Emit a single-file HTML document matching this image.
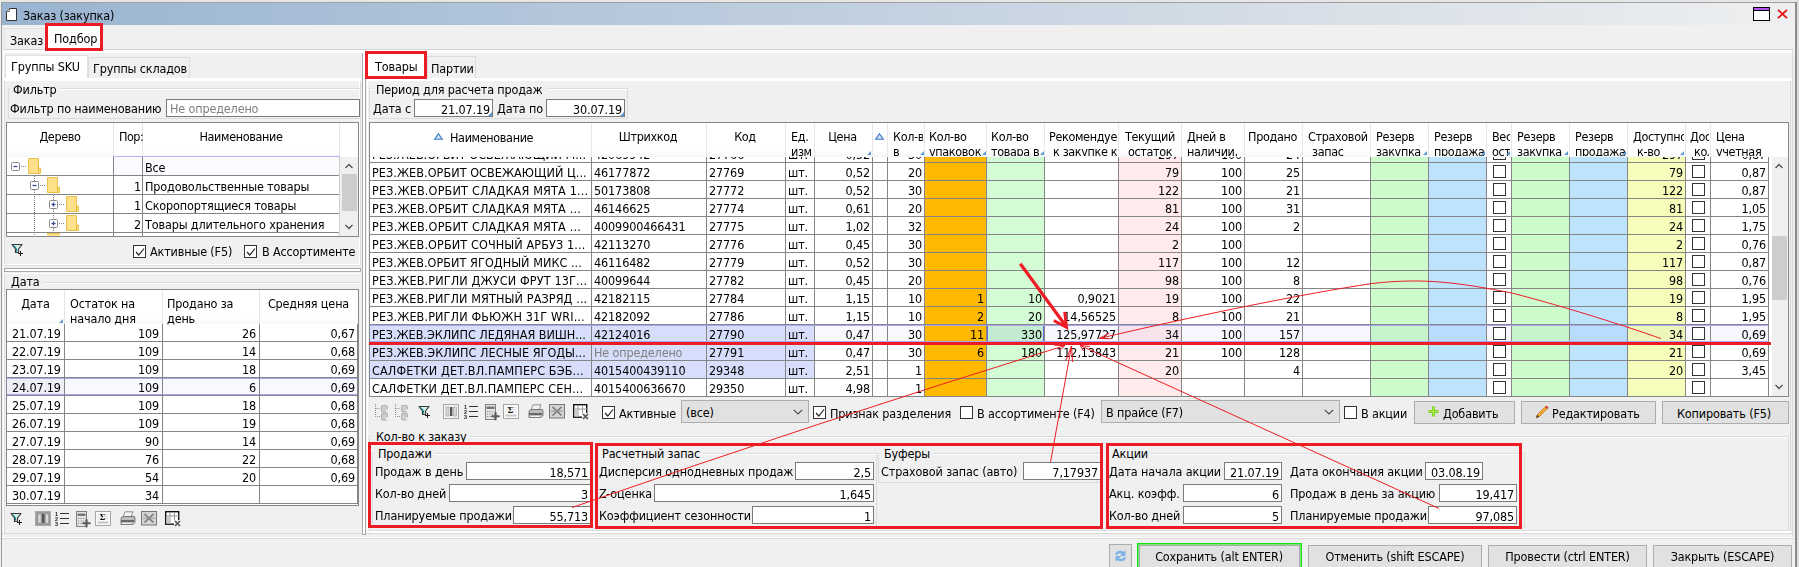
<!DOCTYPE html>
<html lang="ru"><head><meta charset="utf-8"><title>Заказ (закупка)</title>
<style>
html,body{margin:0;padding:0;overflow:hidden}
body{width:1799px;height:567px;position:relative;overflow:hidden;background:#f0f0f0;color:#000;
 font-family:"DejaVu Sans Condensed","Liberation Sans",sans-serif;font-size:12.5px;line-height:16px;letter-spacing:-0.15px}
body div{position:absolute;box-sizing:border-box;white-space:nowrap}
.t{height:16px;overflow:visible}
.g{color:#808080}
.fld{background:#fff;border:1px solid #7a7a7a;text-align:right;padding:2px 2px 0 0;line-height:16px;letter-spacing:-0.12px}
.btn{background:#e1e1e1;border:1px solid #adadad;text-align:center;line-height:20px}
.cb{background:#fff;border:1px solid #333;width:13px;height:13px}
.cbt{background:#fff;border:1px solid #333;width:12px;height:13px}
.hdr{background:linear-gradient(#fff 0,#fff 80%,#f7f8f9 100%)}
.hc{line-height:15px;white-space:nowrap;overflow:hidden;letter-spacing:-0.35px}
.num{letter-spacing:-0.12px}
.uc{letter-spacing:0.1px}
.vl{width:1px;background:#8a8a8a}
.hl{height:1px;background:#8a8a8a}
.cell{height:17px;line-height:17px;overflow:hidden}
svg{position:absolute;overflow:visible}
</style></head><body>
<div style="left:0;top:0;width:1799px;height:567px;overflow:hidden">

<div style="left:0px;top:0px;width:1799px;height:2px;background:#e6e6e6"></div>
<div style="left:1px;top:2px;width:1795px;height:1px;background:#a0a0a0"></div>
<div style="left:1px;top:2px;width:1px;height:565px;background:#9a9a9a"></div>
<div style="left:1795px;top:2px;width:2px;height:565px;background:#8c8c8c"></div>
<div style="left:1797px;top:0px;width:2px;height:567px;background:#dcdcdc"></div>
<div style="left:2px;top:3px;width:1793px;height:22px;background:linear-gradient(90deg,#99b4d1 0,#eeeff0 100%)"></div>
<svg style="left:6px;top:8px" width="12" height="14" viewBox="0 0 12 14"><path d="M3.5 0.5H10.5V12.5H0.5V3.5Z" fill="#fff" stroke="#333" stroke-width="1"/><path d="M3.5 0.5V3.5H0.5" fill="#ddd" stroke="#555" stroke-width="0.8"/></svg>
<div class="t" style="left:23px;top:8px;">Заказ (закупка)</div>
<div style="left:1753px;top:7px;width:17px;height:14px;background:#fff;border:1px solid #000"></div>
<div style="left:1754px;top:8px;width:15px;height:2px;background:#b050f0"></div>
<div style="left:1754px;top:10px;width:15px;height:1px;background:#000"></div>
<svg style="left:1777px;top:9px" width="11" height="10" viewBox="0 0 11 10"><path d="M1 0.8L10 9.2M10 0.8L1 9.2" stroke="#e81010" stroke-width="1.800" fill="none"/></svg>
<div style="left:4px;top:28px;width:42px;height:22px;background:#f0f0f0;border:1px solid #e2e2e2;border-bottom:none"></div>
<div class="t" style="left:10px;top:33px;">Заказ</div>
<div style="left:46px;top:25px;width:56px;height:26px;background:#fff"></div>
<div class="t" style="left:54px;top:31px;">Подбор</div>
<div style="left:3px;top:49px;width:1790px;height:1px;background:#d4d4d4"></div>
<div style="left:3px;top:50px;width:1790px;height:3px;background:#fff"></div>
<div style="left:3px;top:50px;width:1px;height:488px;background:#fff"></div>
<div style="left:1792px;top:50px;width:1px;height:488px;background:#dadada"></div>
<div style="left:5px;top:55px;width:83px;height:24px;background:#fff;border:1px solid #e0e0e0;border-bottom:none"></div>
<div class="t" style="left:11px;top:59px;">Группы SKU</div>
<div style="left:88px;top:57px;width:102px;height:21px;background:#f0f0f0;border:1px solid #dcdcdc;border-bottom:none"></div>
<div class="t" style="left:93px;top:61px;">Группы складов</div>
<div style="left:4px;top:78px;width:357px;height:3px;background:#fff"></div>
<div style="left:4px;top:81px;width:1px;height:185px;background:#dcdcdc"></div>
<div style="left:360px;top:81px;width:1px;height:185px;background:#dcdcdc"></div>
<div style="left:359px;top:81px;width:1px;height:184px;background:#fff"></div>
<div style="left:4px;top:264px;width:356px;height:1px;background:#fff"></div>
<div style="left:4px;top:265px;width:357px;height:1px;background:#dcdcdc"></div>
<div style="left:8px;top:88px;width:352px;height:1px;background:#dcdcdc"></div>
<div style="left:8px;top:89px;width:352px;height:1px;background:#fff"></div>
<div style="left:8px;top:88px;width:1px;height:30px;background:#dcdcdc"></div>
<div style="left:8px;top:118px;width:352px;height:1px;background:#dcdcdc"></div>
<div class="t" style="left:10px;top:82px;background:#f0f0f0;padding:0 3px">Фильтр</div>
<div class="t" style="left:10px;top:101px;">Фильтр по наименованию</div>
<div style="left:166px;top:99px;width:194px;height:18px;background:#fff;border:1px solid #7a7a7a"></div>
<div class="t g" style="left:170px;top:101px;">Не определено</div>
<div style="left:6px;top:122px;width:353px;height:115px;background:#fff;border:1px solid #828790"></div>
<div class="hdr" style="left:7px;top:123px;width:333px;height:34px;"></div>
<div style="left:113px;top:123px;width:1px;height:33px;background:#e5e5e5"></div>
<div style="left:142px;top:123px;width:1px;height:33px;background:#e5e5e5"></div>
<div style="left:339px;top:123px;width:1px;height:33px;background:#e5e5e5"></div>
<div class="t" style="left:7px;top:129px;width:106px;text-align:center;letter-spacing:-0.35px">Дерево</div>
<div class="t" style="left:119px;top:129px;width:24px;overflow:hidden;letter-spacing:-0.5px">Пор:</div>
<div class="t" style="left:143px;top:129px;width:196px;text-align:center;letter-spacing:-0.35px">Наименование</div>
<div style="left:113px;top:156px;width:227px;height:20px;background:#fafaff;border-top:1px solid #b4b4f0;border-bottom:1px solid #b4b4f0"></div>
<div style="left:7px;top:175px;width:332px;height:1px;background:#858585"></div>
<div style="left:7px;top:194px;width:332px;height:1px;background:#858585"></div>
<div style="left:7px;top:213px;width:332px;height:1px;background:#858585"></div>
<div style="left:7px;top:232px;width:332px;height:1px;background:#858585"></div>
<div style="left:113px;top:157px;width:1px;height:79px;background:#858585"></div>
<div style="left:142px;top:157px;width:1px;height:79px;background:#858585"></div>
<div style="left:339px;top:157px;width:1px;height:79px;background:#d0d0d0"></div>
<svg style="left:11px;top:162px" width="9" height="9" viewBox="0 0 9 9"><rect x="0.5" y="0.5" width="8" height="8" rx="1" fill="#fff" stroke="#8a8a8a"/><path d="M2.5 4.5H6.5" stroke="#3a4a9a" stroke-width="1.3"/></svg>
<div style="left:21px;top:166px;width:5px;height:1px;background:repeating-linear-gradient(90deg,#808080 0 1px,transparent 1px 2px)"></div>
<svg style="left:28px;top:158px" width="13" height="16" viewBox="0 0 13 16"><path d="M0.5 0.5H10.5V10H12.5V15.5H0.5Z" fill="#ffe08a" stroke="#eac04c" stroke-width="1"/><path d="M10.5 10V15.5" stroke="#e8b930" stroke-width="1" fill="none"/></svg>
<div style="left:34px;top:176px;width:1px;height:5px;background:repeating-linear-gradient(180deg,#808080 0 1px,transparent 1px 2px)"></div>
<svg style="left:30px;top:181px" width="9" height="9" viewBox="0 0 9 9"><rect x="0.5" y="0.5" width="8" height="8" rx="1" fill="#fff" stroke="#8a8a8a"/><path d="M2.5 4.5H6.5" stroke="#3a4a9a" stroke-width="1.3"/></svg>
<div style="left:40px;top:185px;width:5px;height:1px;background:repeating-linear-gradient(90deg,#808080 0 1px,transparent 1px 2px)"></div>
<svg style="left:47px;top:177px" width="13" height="16" viewBox="0 0 13 16"><path d="M0.5 0.5H10.5V10H12.5V15.5H0.5Z" fill="#ffe08a" stroke="#eac04c" stroke-width="1"/><path d="M10.5 10V15.5" stroke="#e8b930" stroke-width="1" fill="none"/></svg>
<div style="left:34px;top:190px;width:1px;height:46px;background:repeating-linear-gradient(180deg,#808080 0 1px,transparent 1px 2px)"></div>
<div style="left:53px;top:195px;width:1px;height:5px;background:repeating-linear-gradient(180deg,#808080 0 1px,transparent 1px 2px)"></div>
<svg style="left:49px;top:200px" width="9" height="9" viewBox="0 0 9 9"><rect x="0.5" y="0.5" width="8" height="8" rx="1" fill="#fff" stroke="#8a8a8a"/><path d="M2.5 4.5H6.5" stroke="#3a4a9a" stroke-width="1.3"/><path d="M4.5 2.5V6.5" stroke="#3a4a9a" stroke-width="1.3"/></svg>
<div style="left:59px;top:204px;width:5px;height:1px;background:repeating-linear-gradient(90deg,#808080 0 1px,transparent 1px 2px)"></div>
<svg style="left:66px;top:196px" width="13" height="16" viewBox="0 0 13 16"><path d="M0.5 0.5H10.5V10H12.5V15.5H0.5Z" fill="#ffe08a" stroke="#eac04c" stroke-width="1"/><path d="M10.5 10V15.5" stroke="#e8b930" stroke-width="1" fill="none"/></svg>
<div style="left:53px;top:209px;width:1px;height:10px;background:repeating-linear-gradient(180deg,#808080 0 1px,transparent 1px 2px)"></div>
<svg style="left:49px;top:219px" width="9" height="9" viewBox="0 0 9 9"><rect x="0.5" y="0.5" width="8" height="8" rx="1" fill="#fff" stroke="#8a8a8a"/><path d="M2.5 4.5H6.5" stroke="#3a4a9a" stroke-width="1.3"/><path d="M4.5 2.5V6.5" stroke="#3a4a9a" stroke-width="1.3"/></svg>
<div style="left:59px;top:223px;width:5px;height:1px;background:repeating-linear-gradient(90deg,#808080 0 1px,transparent 1px 2px)"></div>
<svg style="left:66px;top:215px" width="13" height="16" viewBox="0 0 13 16"><path d="M0.5 0.5H10.5V10H12.5V15.5H0.5Z" fill="#ffe08a" stroke="#eac04c" stroke-width="1"/><path d="M10.5 10V15.5" stroke="#e8b930" stroke-width="1" fill="none"/></svg>
<div style="left:53px;top:228px;width:1px;height:4px;background:repeating-linear-gradient(180deg,#808080 0 1px,transparent 1px 2px)"></div>
<div style="left:47px;top:233px;width:13px;height:3px;background:#ffe08a;border-top:1px solid #eac04c"></div>
<div class="t" style="left:145px;top:160px;">Все</div>
<div class="t" style="left:114px;top:179px;width:27px;text-align:right;">1</div>
<div class="t" style="left:145px;top:179px;">Продовольственные товары</div>
<div class="t" style="left:114px;top:198px;width:27px;text-align:right;">1</div>
<div class="t" style="left:145px;top:198px;">Скоропортящиеся товары</div>
<div class="t" style="left:114px;top:217px;width:27px;text-align:right;">2</div>
<div class="t" style="left:145px;top:217px;">Товары длительного хранения</div>
<div style="left:340px;top:157px;width:18px;height:79px;background:#f0f0f0"></div>
<div style="left:342px;top:174px;width:15px;height:37px;background:#cdcdcd"></div>
<svg style="left:345px;top:163px" width="8" height="6" viewBox="0 0 8 6"><path d="M0.5 5L4 1.5L7.5 5" fill="none" stroke="#505050" stroke-width="1.3"/></svg>
<svg style="left:345px;top:224px" width="8" height="6" viewBox="0 0 8 6"><path d="M0.5 1L4 4.5L7.5 1" fill="none" stroke="#505050" stroke-width="1.3"/></svg>
<svg style="left:11px;top:243px" width="14" height="14" viewBox="0 0 14 14"><path d="M1 1.500H11L7.500 6V9.500H4.500V6Z" fill="#cfeeee" stroke="#3a3a3a" stroke-width="1.200" stroke-linejoin="round"/><path d="M3 2.500L5.500 6V8.500" fill="none" stroke="#0a8a8a" stroke-width="1"/><path d="M9.500 8V13M7 10.500H12" stroke="#1a1a1a" stroke-width="1"/></svg>
<div style="left:133px;top:245px;width:13px;height:13px;background:#fff;border:1px solid #333"><svg style="left:1px;top:1px" width="10" height="10" viewBox="0 0 10 10"><path d="M1 5L3.8 8L9 1.5" fill="none" stroke="#222" stroke-width="1.2"/></svg></div>
<div class="t" style="left:150px;top:244px;">Активные (F5)</div>
<div style="left:244px;top:245px;width:13px;height:13px;background:#fff;border:1px solid #333"><svg style="left:1px;top:1px" width="10" height="10" viewBox="0 0 10 10"><path d="M1 5L3.8 8L9 1.5" fill="none" stroke="#222" stroke-width="1.2"/></svg></div>
<div class="t" style="left:262px;top:244px;">В Ассортименте</div>
<div style="left:4px;top:268px;width:357px;height:4px;background:#fff;border:1px solid #a8a8a8"></div>
<div style="left:4px;top:273px;width:357px;height:1px;background:#fff"></div>
<div style="left:4px;top:274px;width:1px;height:260px;background:#dcdcdc"></div>
<div style="left:2px;top:533px;width:360px;height:1px;background:#d9d9d9"></div>
<div style="left:8px;top:282px;width:352px;height:1px;background:#dcdcdc"></div>
<div style="left:8px;top:283px;width:352px;height:1px;background:#fff"></div>
<div class="t" style="left:8px;top:274px;background:#f0f0f0;padding:0 3px">Дата</div>
<div style="left:6px;top:289px;width:353px;height:217px;background:#fff;border:1px solid #828790"></div>
<div class="hdr" style="left:7px;top:290px;width:351px;height:34px;"></div>
<div style="left:64px;top:290px;width:1px;height:34px;background:#e5e5e5"></div>
<div style="left:162px;top:290px;width:1px;height:34px;background:#e5e5e5"></div>
<div style="left:259px;top:290px;width:1px;height:34px;background:#e5e5e5"></div>
<div class="t" style="left:7px;top:296px;width:57px;text-align:center;">Дата</div>
<div class="t" style="left:70px;top:296px;">Остаток на</div>
<div class="t" style="left:70px;top:311px;">начало дня</div>
<div class="t" style="left:167px;top:296px;">Продано за</div>
<div class="t" style="left:167px;top:311px;">день</div>
<div class="t" style="left:260px;top:296px;width:97px;text-align:center;">Средняя цена</div>
<svg style="left:59px;top:319px" width="4" height="4" viewBox="0 0 4 4"><path d="M4 0V4H0Z" fill="#5b9bd5"/></svg>
<div class="t" style="left:12px;top:326px;">21.07.19</div>
<div class="t" style="left:65px;top:326px;width:94px;text-align:right;">109</div>
<div class="t" style="left:163px;top:326px;width:93px;text-align:right;">26</div>
<div class="t" style="left:260px;top:326px;width:95px;text-align:right;">0,67</div>
<div style="left:7px;top:341px;width:351px;height:1px;background:#858585"></div>
<div class="t" style="left:12px;top:344px;">22.07.19</div>
<div class="t" style="left:65px;top:344px;width:94px;text-align:right;">109</div>
<div class="t" style="left:163px;top:344px;width:93px;text-align:right;">14</div>
<div class="t" style="left:260px;top:344px;width:95px;text-align:right;">0,68</div>
<div style="left:7px;top:359px;width:351px;height:1px;background:#858585"></div>
<div class="t" style="left:12px;top:362px;">23.07.19</div>
<div class="t" style="left:65px;top:362px;width:94px;text-align:right;">109</div>
<div class="t" style="left:163px;top:362px;width:93px;text-align:right;">18</div>
<div class="t" style="left:260px;top:362px;width:95px;text-align:right;">0,69</div>
<div style="left:7px;top:378px;width:351px;height:17px;background:#f8f8ff"></div>
<div style="left:7px;top:378px;width:57px;height:17px;background:#eeeef6"></div>
<div style="left:7px;top:377px;width:351px;height:1px;background:#858585"></div>
<div class="t" style="left:12px;top:380px;">24.07.19</div>
<div class="t" style="left:65px;top:380px;width:94px;text-align:right;">109</div>
<div class="t" style="left:163px;top:380px;width:93px;text-align:right;">6</div>
<div class="t" style="left:260px;top:380px;width:95px;text-align:right;">0,69</div>
<div style="left:7px;top:395px;width:351px;height:1px;background:#858585"></div>
<div class="t" style="left:12px;top:398px;">25.07.19</div>
<div class="t" style="left:65px;top:398px;width:94px;text-align:right;">109</div>
<div class="t" style="left:163px;top:398px;width:93px;text-align:right;">18</div>
<div class="t" style="left:260px;top:398px;width:95px;text-align:right;">0,68</div>
<div style="left:7px;top:413px;width:351px;height:1px;background:#858585"></div>
<div class="t" style="left:12px;top:416px;">26.07.19</div>
<div class="t" style="left:65px;top:416px;width:94px;text-align:right;">109</div>
<div class="t" style="left:163px;top:416px;width:93px;text-align:right;">19</div>
<div class="t" style="left:260px;top:416px;width:95px;text-align:right;">0,68</div>
<div style="left:7px;top:431px;width:351px;height:1px;background:#858585"></div>
<div class="t" style="left:12px;top:434px;">27.07.19</div>
<div class="t" style="left:65px;top:434px;width:94px;text-align:right;">90</div>
<div class="t" style="left:163px;top:434px;width:93px;text-align:right;">14</div>
<div class="t" style="left:260px;top:434px;width:95px;text-align:right;">0,69</div>
<div style="left:7px;top:449px;width:351px;height:1px;background:#858585"></div>
<div class="t" style="left:12px;top:452px;">28.07.19</div>
<div class="t" style="left:65px;top:452px;width:94px;text-align:right;">76</div>
<div class="t" style="left:163px;top:452px;width:93px;text-align:right;">22</div>
<div class="t" style="left:260px;top:452px;width:95px;text-align:right;">0,68</div>
<div style="left:7px;top:467px;width:351px;height:1px;background:#858585"></div>
<div class="t" style="left:12px;top:470px;">29.07.19</div>
<div class="t" style="left:65px;top:470px;width:94px;text-align:right;">54</div>
<div class="t" style="left:163px;top:470px;width:93px;text-align:right;">20</div>
<div class="t" style="left:260px;top:470px;width:95px;text-align:right;">0,69</div>
<div style="left:7px;top:485px;width:351px;height:1px;background:#858585"></div>
<div class="t" style="left:12px;top:488px;">30.07.19</div>
<div class="t" style="left:65px;top:488px;width:94px;text-align:right;">34</div>
<div class="t" style="left:163px;top:488px;width:93px;text-align:right;"></div>
<div class="t" style="left:260px;top:488px;width:95px;text-align:right;"></div>
<div style="left:7px;top:503px;width:351px;height:1px;background:#858585"></div>
<div style="left:7px;top:378px;width:351px;height:1px;background:#a8a8f6"></div>
<div style="left:7px;top:394px;width:351px;height:1px;background:#a8a8f6"></div>
<div style="left:64px;top:324px;width:1px;height:180px;background:#858585"></div>
<div style="left:162px;top:324px;width:1px;height:180px;background:#858585"></div>
<div style="left:259px;top:324px;width:1px;height:180px;background:#858585"></div>
<div style="left:357px;top:324px;width:1px;height:180px;background:#858585"></div>
<svg style="left:10px;top:512px" width="14" height="14" viewBox="0 0 14 14"><path d="M1 1.500H11L7.500 6V9.500H4.500V6Z" fill="#cfeeee" stroke="#3a3a3a" stroke-width="1.200" stroke-linejoin="round"/><path d="M3 2.500L5.500 6V8.500" fill="none" stroke="#0a8a8a" stroke-width="1"/><path d="M9.500 8V13M7 10.500H12" stroke="#1a1a1a" stroke-width="1"/></svg>
<svg style="left:35px;top:511px" width="16" height="15" viewBox="0 0 16 15"><rect x="0.5" y="0.5" width="15" height="14" fill="#9a9a9a" stroke="#a8a8a8"/><rect x="3" y="3" width="3" height="9" fill="#d8d8d8" stroke="#999" stroke-width=".6"/><rect x="7" y="3" width="2.4" height="9" fill="#555"/><rect x="10.4" y="3" width="3" height="9" fill="#d8d8d8" stroke="#999" stroke-width=".6"/></svg>
<svg style="left:55px;top:511px" width="15" height="15" viewBox="0 0 15 15"><path d="M5 2.5H14M5 7.5H14M5 12.5H14" stroke="#333" stroke-width="1.1"/><text x="0" y="5" font-size="5.5" font-weight="bold" font-family="Liberation Sans,sans-serif" fill="#222">1</text><text x="0" y="10" font-size="5.5" font-weight="bold" font-family="Liberation Sans,sans-serif" fill="#222">2</text><text x="0" y="15" font-size="5.5" font-weight="bold" font-family="Liberation Sans,sans-serif" fill="#222">3</text></svg>
<svg style="left:76px;top:511px" width="16" height="16" viewBox="0 0 16 16"><rect x="0.500" y="0.500" width="10" height="15" fill="#e6e6e6" stroke="#808080"/><rect x="1.500" y="2.500" width="8" height="2.500" fill="#777"/><path d="M2 7.500H9.500M2 10H9.500M2 12.500H9.500" stroke="#8a8a8a" stroke-width="1.100" stroke-dasharray="1.200 1.200"/><path d="M10.500 9V15.500M7.250 12.250H13.750" stroke="#5a5a5a" stroke-width="2.200" stroke-linecap="round"/></svg>
<svg style="left:95px;top:511px" width="16" height="15" viewBox="0 0 16 15"><rect x="0.500" y="0.500" width="15" height="14" fill="#fbfbfb" stroke="#a6a6a6"/><path d="M2.500 3.500H13.500M2.500 5.500H13.500M2.500 7.500H13.500" stroke="#e0e0e0" stroke-width="1"/><rect x="2.500" y="10.500" width="11" height="2" fill="#c4c4c4"/><text x="4.800" y="9.300" font-size="8.500" font-weight="bold" font-family="Liberation Serif,serif" fill="#111">Σ</text></svg>
<svg style="left:120px;top:511px" width="16" height="15" viewBox="0 0 16 15"><path d="M5 0.800H13L11 6H3Z" fill="#f2f2f2" stroke="#777" stroke-width=".8"/><path d="M1 7L3 5.500H14.500L15 7V11.500L13 13.500H1Z" fill="#bdbdbd" stroke="#666" stroke-width=".8"/><path d="M1 10H14" stroke="#555" stroke-width="1.6"/><path d="M2 12.500H12" stroke="#eee" stroke-width="1"/></svg>
<svg style="left:141px;top:511px" width="16" height="15" viewBox="0 0 16 15"><rect x="0.5" y="0.5" width="15" height="13.500" fill="#d4d4d4" stroke="#777"/><path d="M3.500 3L12.500 11.500M12.500 3L3.500 11.500" stroke="#777" stroke-width="1.600"/><path d="M2 7.200H14" stroke="#999" stroke-width="1"/></svg>
<svg style="left:165px;top:511px" width="16" height="16" viewBox="0 0 16 16"><rect x="0.700" y="0.700" width="13" height="12.500" fill="#fff" stroke="#111" stroke-width="1.400"/><path d="M1 5H14M5 1V13M9.500 1V13" stroke="#999" stroke-width="1"/><rect x="1.500" y="5.500" width="3.500" height="7" fill="#ccc"/><rect x="9" y="9" width="7" height="7" fill="#eee"/><path d="M10 10L15 15M15 10L10 15" stroke="#555" stroke-width="1.600"/></svg>
<div style="left:362px;top:53px;width:4px;height:482px;background:#fff;border:1px solid #ababab;border-top:none"></div>
<div style="left:368px;top:54px;width:58px;height:24px;background:#fff"></div>
<div class="t" style="left:375px;top:59px;">Товары</div>
<div style="left:427px;top:56px;width:49px;height:22px;background:#f0f0f0;border:1px solid #dcdcdc;border-bottom:none"></div>
<div class="t" style="left:431px;top:61px;">Партии</div>
<div style="left:367px;top:78px;width:1425px;height:3px;background:#fff"></div>
<div style="left:367px;top:78px;width:1px;height:455px;background:#fff"></div>
<div style="left:1790px;top:81px;width:1px;height:452px;background:#d9d9d9"></div>
<div style="left:369px;top:531px;width:1422px;height:2px;background:#fff"></div>
<div style="left:367px;top:533px;width:1425px;height:1px;background:#d9d9d9"></div>
<div style="left:369px;top:88px;width:259px;height:1px;background:#dcdcdc"></div>
<div style="left:369px;top:89px;width:259px;height:1px;background:#fff"></div>
<div style="left:369px;top:88px;width:1px;height:30px;background:#dcdcdc"></div>
<div style="left:627px;top:88px;width:1px;height:30px;background:#dcdcdc"></div>
<div style="left:369px;top:118px;width:259px;height:1px;background:#dcdcdc"></div>
<div class="t" style="left:373px;top:82px;background:#f0f0f0;padding:0 3px">Период для расчета продаж</div>
<div class="t" style="left:373px;top:101px;">Дата с</div>
<div class="fld" style="left:414px;top:99px;width:79px;height:18px;">21.07.19</div>
<div class="t" style="left:497px;top:101px;">Дата по</div>
<div class="fld" style="left:546px;top:99px;width:79px;height:18px;">30.07.19</div>
<svg style="left:488px;top:112px" width="4" height="4" viewBox="0 0 4 4"><path d="M4 0V4H0Z" fill="#5b9bd5"/></svg>
<svg style="left:620px;top:112px" width="4" height="4" viewBox="0 0 4 4"><path d="M4 0V4H0Z" fill="#5b9bd5"/></svg>
<div style="left:369px;top:122px;width:1420px;height:275px;background:#fff;border:1px solid #828790"></div>
<div style="left:924px;top:157px;width:62px;height:239px;background:#ffb900"></div>
<div style="left:986px;top:157px;width:58px;height:239px;background:#d4fcd4"></div>
<div style="left:1118px;top:157px;width:63px;height:239px;background:#ffebeb"></div>
<div style="left:1370px;top:157px;width:58px;height:239px;background:#ccfccc"></div>
<div style="left:1428px;top:157px;width:58px;height:239px;background:#bde3fd"></div>
<div style="left:1511px;top:157px;width:58px;height:239px;background:#ccfccc"></div>
<div style="left:1569px;top:157px;width:58px;height:239px;background:#bde3fd"></div>
<div style="left:1627px;top:157px;width:58px;height:239px;background:#f6fdba"></div>
<div style="left:370px;top:325px;width:444px;height:17px;background:#d6defb"></div>
<div style="left:370px;top:343px;width:444px;height:17px;background:#d6defb"></div>
<div style="left:370px;top:361px;width:444px;height:17px;background:#d6defb"></div>
<div style="left:815px;top:325px;width:109px;height:17px;background:#f8f8ff"></div>
<div style="left:1045px;top:325px;width:723px;height:17px;background:#f7f7ff;mix-blend-mode:multiply"></div>
<div style="left:987px;top:325px;width:57px;height:17px;background:#c3ebcf;border:1px solid #6a6ae0"></div>
<div style="left:0;top:157px;width:1790px;height:239px;overflow:hidden">
<div class="cell uc" style="left:372px;top:-11px;width:218px;letter-spacing:0.0px">РЕЗ.ЖЕВ.ОРБИТ ОСВЕЖАЮЩИЙ М...</div>
<div class="cell num" style="left:594px;top:-11px;width:111px">42069942</div>
<div class="cell num" style="left:709px;top:-11px;width:75px">27766</div>
<div class="cell num" style="left:788px;top:-11px;width:25px">шт.</div>
<div class="cell num" style="left:814px;top:-11px;width:56px;text-align:right">0,52</div>
<div class="cell num" style="left:887px;top:-11px;width:35px;text-align:right">30</div>
<div class="cell num" style="left:1118px;top:-11px;width:61px;text-align:right">297</div>
<div class="cell num" style="left:1181px;top:-11px;width:61px;text-align:right">100</div>
<div class="cell num" style="left:1244px;top:-11px;width:56px;text-align:right">24</div>
<div class="cell num" style="left:1627px;top:-11px;width:56px;text-align:right">297</div>
<div class="cell num" style="left:1710px;top:-11px;width:56px;text-align:right">0,87</div>
<div style="left:1493px;top:-10px;width:13px;height:13px;background:#fff;border:1px solid #333"></div>
<div style="left:1692px;top:-10px;width:13px;height:13px;background:#fff;border:1px solid #333"></div>
<div class="cell uc" style="left:372px;top:7px;width:218px;letter-spacing:0.059px">РЕЗ.ЖЕВ.ОРБИТ ОСВЕЖАЮЩИЙ Ц...</div>
<div class="cell num" style="left:594px;top:7px;width:111px">46177872</div>
<div class="cell num" style="left:709px;top:7px;width:75px">27769</div>
<div class="cell num" style="left:788px;top:7px;width:25px">шт.</div>
<div class="cell num" style="left:814px;top:7px;width:56px;text-align:right">0,52</div>
<div class="cell num" style="left:887px;top:7px;width:35px;text-align:right">20</div>
<div class="cell num" style="left:1118px;top:7px;width:61px;text-align:right">79</div>
<div class="cell num" style="left:1181px;top:7px;width:61px;text-align:right">100</div>
<div class="cell num" style="left:1244px;top:7px;width:56px;text-align:right">25</div>
<div class="cell num" style="left:1627px;top:7px;width:56px;text-align:right">79</div>
<div class="cell num" style="left:1710px;top:7px;width:56px;text-align:right">0,87</div>
<div style="left:1493px;top:8px;width:13px;height:13px;background:#fff;border:1px solid #333"></div>
<div style="left:1692px;top:8px;width:13px;height:13px;background:#fff;border:1px solid #333"></div>
<div class="cell uc" style="left:372px;top:25px;width:218px;letter-spacing:0.181px">РЕЗ.ЖЕВ.ОРБИТ СЛАДКАЯ МЯТА 1...</div>
<div class="cell num" style="left:594px;top:25px;width:111px">50173808</div>
<div class="cell num" style="left:709px;top:25px;width:75px">27772</div>
<div class="cell num" style="left:788px;top:25px;width:25px">шт.</div>
<div class="cell num" style="left:814px;top:25px;width:56px;text-align:right">0,52</div>
<div class="cell num" style="left:887px;top:25px;width:35px;text-align:right">30</div>
<div class="cell num" style="left:1118px;top:25px;width:61px;text-align:right">122</div>
<div class="cell num" style="left:1181px;top:25px;width:61px;text-align:right">100</div>
<div class="cell num" style="left:1244px;top:25px;width:56px;text-align:right">21</div>
<div class="cell num" style="left:1627px;top:25px;width:56px;text-align:right">122</div>
<div class="cell num" style="left:1710px;top:25px;width:56px;text-align:right">0,87</div>
<div style="left:1493px;top:26px;width:13px;height:13px;background:#fff;border:1px solid #333"></div>
<div style="left:1692px;top:26px;width:13px;height:13px;background:#fff;border:1px solid #333"></div>
<div class="cell uc" style="left:372px;top:43px;width:218px;letter-spacing:0.18px">РЕЗ.ЖЕВ.ОРБИТ СЛАДКАЯ МЯТА ...</div>
<div class="cell num" style="left:594px;top:43px;width:111px">46146625</div>
<div class="cell num" style="left:709px;top:43px;width:75px">27774</div>
<div class="cell num" style="left:788px;top:43px;width:25px">шт.</div>
<div class="cell num" style="left:814px;top:43px;width:56px;text-align:right">0,61</div>
<div class="cell num" style="left:887px;top:43px;width:35px;text-align:right">20</div>
<div class="cell num" style="left:1118px;top:43px;width:61px;text-align:right">81</div>
<div class="cell num" style="left:1181px;top:43px;width:61px;text-align:right">100</div>
<div class="cell num" style="left:1244px;top:43px;width:56px;text-align:right">31</div>
<div class="cell num" style="left:1627px;top:43px;width:56px;text-align:right">81</div>
<div class="cell num" style="left:1710px;top:43px;width:56px;text-align:right">1,05</div>
<div style="left:1493px;top:44px;width:13px;height:13px;background:#fff;border:1px solid #333"></div>
<div style="left:1692px;top:44px;width:13px;height:13px;background:#fff;border:1px solid #333"></div>
<div class="cell uc" style="left:372px;top:61px;width:218px;letter-spacing:0.18px">РЕЗ.ЖЕВ.ОРБИТ СЛАДКАЯ МЯТА ...</div>
<div class="cell num" style="left:594px;top:61px;width:111px">4009900466431</div>
<div class="cell num" style="left:709px;top:61px;width:75px">27775</div>
<div class="cell num" style="left:788px;top:61px;width:25px">шт.</div>
<div class="cell num" style="left:814px;top:61px;width:56px;text-align:right">1,02</div>
<div class="cell num" style="left:887px;top:61px;width:35px;text-align:right">32</div>
<div class="cell num" style="left:1118px;top:61px;width:61px;text-align:right">24</div>
<div class="cell num" style="left:1181px;top:61px;width:61px;text-align:right">100</div>
<div class="cell num" style="left:1244px;top:61px;width:56px;text-align:right">2</div>
<div class="cell num" style="left:1627px;top:61px;width:56px;text-align:right">24</div>
<div class="cell num" style="left:1710px;top:61px;width:56px;text-align:right">1,75</div>
<div style="left:1493px;top:62px;width:13px;height:13px;background:#fff;border:1px solid #333"></div>
<div style="left:1692px;top:62px;width:13px;height:13px;background:#fff;border:1px solid #333"></div>
<div class="cell uc" style="left:372px;top:79px;width:218px;letter-spacing:0.113px">РЕЗ.ЖЕВ.ОРБИТ СОЧНЫЙ АРБУЗ 1...</div>
<div class="cell num" style="left:594px;top:79px;width:111px">42113270</div>
<div class="cell num" style="left:709px;top:79px;width:75px">27776</div>
<div class="cell num" style="left:788px;top:79px;width:25px">шт.</div>
<div class="cell num" style="left:814px;top:79px;width:56px;text-align:right">0,45</div>
<div class="cell num" style="left:887px;top:79px;width:35px;text-align:right">30</div>
<div class="cell num" style="left:1118px;top:79px;width:61px;text-align:right">2</div>
<div class="cell num" style="left:1181px;top:79px;width:61px;text-align:right">100</div>
<div class="cell num" style="left:1627px;top:79px;width:56px;text-align:right">2</div>
<div class="cell num" style="left:1710px;top:79px;width:56px;text-align:right">0,76</div>
<div style="left:1493px;top:80px;width:13px;height:13px;background:#fff;border:1px solid #333"></div>
<div style="left:1692px;top:80px;width:13px;height:13px;background:#fff;border:1px solid #333"></div>
<div class="cell uc" style="left:372px;top:97px;width:218px;letter-spacing:0.053px">РЕЗ.ЖЕВ.ОРБИТ ЯГОДНЫЙ МИКС ...</div>
<div class="cell num" style="left:594px;top:97px;width:111px">46116482</div>
<div class="cell num" style="left:709px;top:97px;width:75px">27779</div>
<div class="cell num" style="left:788px;top:97px;width:25px">шт.</div>
<div class="cell num" style="left:814px;top:97px;width:56px;text-align:right">0,52</div>
<div class="cell num" style="left:887px;top:97px;width:35px;text-align:right">30</div>
<div class="cell num" style="left:1118px;top:97px;width:61px;text-align:right">117</div>
<div class="cell num" style="left:1181px;top:97px;width:61px;text-align:right">100</div>
<div class="cell num" style="left:1244px;top:97px;width:56px;text-align:right">12</div>
<div class="cell num" style="left:1627px;top:97px;width:56px;text-align:right">117</div>
<div class="cell num" style="left:1710px;top:97px;width:56px;text-align:right">0,87</div>
<div style="left:1493px;top:98px;width:13px;height:13px;background:#fff;border:1px solid #333"></div>
<div style="left:1692px;top:98px;width:13px;height:13px;background:#fff;border:1px solid #333"></div>
<div class="cell uc" style="left:372px;top:115px;width:218px;letter-spacing:0.139px">РЕЗ.ЖЕВ.РИГЛИ ДЖУСИ ФРУТ 13Г...</div>
<div class="cell num" style="left:594px;top:115px;width:111px">40099644</div>
<div class="cell num" style="left:709px;top:115px;width:75px">27782</div>
<div class="cell num" style="left:788px;top:115px;width:25px">шт.</div>
<div class="cell num" style="left:814px;top:115px;width:56px;text-align:right">0,45</div>
<div class="cell num" style="left:887px;top:115px;width:35px;text-align:right">20</div>
<div class="cell num" style="left:1118px;top:115px;width:61px;text-align:right">98</div>
<div class="cell num" style="left:1181px;top:115px;width:61px;text-align:right">100</div>
<div class="cell num" style="left:1244px;top:115px;width:56px;text-align:right">8</div>
<div class="cell num" style="left:1627px;top:115px;width:56px;text-align:right">98</div>
<div class="cell num" style="left:1710px;top:115px;width:56px;text-align:right">0,76</div>
<div style="left:1493px;top:116px;width:13px;height:13px;background:#fff;border:1px solid #333"></div>
<div style="left:1692px;top:116px;width:13px;height:13px;background:#fff;border:1px solid #333"></div>
<div class="cell uc" style="left:372px;top:133px;width:218px;letter-spacing:0.113px">РЕЗ.ЖЕВ.РИГЛИ МЯТНЫЙ РАЗРЯД ...</div>
<div class="cell num" style="left:594px;top:133px;width:111px">42182115</div>
<div class="cell num" style="left:709px;top:133px;width:75px">27784</div>
<div class="cell num" style="left:788px;top:133px;width:25px">шт.</div>
<div class="cell num" style="left:814px;top:133px;width:56px;text-align:right">1,15</div>
<div class="cell num" style="left:887px;top:133px;width:35px;text-align:right">10</div>
<div class="cell num" style="left:924px;top:133px;width:60px;text-align:right">1</div>
<div class="cell num" style="left:986px;top:133px;width:56px;text-align:right">10</div>
<div class="cell num" style="left:1044px;top:133px;width:72px;text-align:right">0,9021</div>
<div class="cell num" style="left:1118px;top:133px;width:61px;text-align:right">19</div>
<div class="cell num" style="left:1181px;top:133px;width:61px;text-align:right">100</div>
<div class="cell num" style="left:1244px;top:133px;width:56px;text-align:right">22</div>
<div class="cell num" style="left:1627px;top:133px;width:56px;text-align:right">19</div>
<div class="cell num" style="left:1710px;top:133px;width:56px;text-align:right">1,95</div>
<div style="left:1493px;top:134px;width:13px;height:13px;background:#fff;border:1px solid #333"></div>
<div style="left:1692px;top:134px;width:13px;height:13px;background:#fff;border:1px solid #333"></div>
<div class="cell uc" style="left:372px;top:151px;width:218px;letter-spacing:0.123px">РЕЗ.ЖЕВ.РИГЛИ ФЬЮЖН 31Г WRI...</div>
<div class="cell num" style="left:594px;top:151px;width:111px">42182092</div>
<div class="cell num" style="left:709px;top:151px;width:75px">27786</div>
<div class="cell num" style="left:788px;top:151px;width:25px">шт.</div>
<div class="cell num" style="left:814px;top:151px;width:56px;text-align:right">1,15</div>
<div class="cell num" style="left:887px;top:151px;width:35px;text-align:right">10</div>
<div class="cell num" style="left:924px;top:151px;width:60px;text-align:right">2</div>
<div class="cell num" style="left:986px;top:151px;width:56px;text-align:right">20</div>
<div class="cell num" style="left:1044px;top:151px;width:72px;text-align:right">14,56525</div>
<div class="cell num" style="left:1118px;top:151px;width:61px;text-align:right">8</div>
<div class="cell num" style="left:1181px;top:151px;width:61px;text-align:right">100</div>
<div class="cell num" style="left:1244px;top:151px;width:56px;text-align:right">21</div>
<div class="cell num" style="left:1627px;top:151px;width:56px;text-align:right">8</div>
<div class="cell num" style="left:1710px;top:151px;width:56px;text-align:right">1,95</div>
<div style="left:1493px;top:152px;width:13px;height:13px;background:#fff;border:1px solid #333"></div>
<div style="left:1692px;top:152px;width:13px;height:13px;background:#fff;border:1px solid #333"></div>
<div class="cell uc" style="left:372px;top:169px;width:218px;letter-spacing:-0.033px">РЕЗ.ЖЕВ.ЭКЛИПС ЛЕДЯНАЯ ВИШН...</div>
<div class="cell num" style="left:594px;top:169px;width:111px">42124016</div>
<div class="cell num" style="left:709px;top:169px;width:75px">27790</div>
<div class="cell num" style="left:788px;top:169px;width:25px">шт.</div>
<div class="cell num" style="left:814px;top:169px;width:56px;text-align:right">0,47</div>
<div class="cell num" style="left:887px;top:169px;width:35px;text-align:right">30</div>
<div class="cell num" style="left:924px;top:169px;width:60px;text-align:right">11</div>
<div class="cell num" style="left:986px;top:169px;width:56px;text-align:right">330</div>
<div class="cell num" style="left:1044px;top:169px;width:72px;text-align:right">125,97727</div>
<div class="cell num" style="left:1118px;top:169px;width:61px;text-align:right">34</div>
<div class="cell num" style="left:1181px;top:169px;width:61px;text-align:right">100</div>
<div class="cell num" style="left:1244px;top:169px;width:56px;text-align:right">157</div>
<div class="cell num" style="left:1627px;top:169px;width:56px;text-align:right">34</div>
<div class="cell num" style="left:1710px;top:169px;width:56px;text-align:right">0,69</div>
<div style="left:1493px;top:170px;width:13px;height:13px;background:#fff;border:1px solid #333"></div>
<div style="left:1692px;top:170px;width:13px;height:13px;background:#fff;border:1px solid #333"></div>
<div class="cell uc" style="left:372px;top:187px;width:218px;letter-spacing:0.02px">РЕЗ.ЖЕВ.ЭКЛИПС ЛЕСНЫЕ ЯГОДЫ...</div>
<div class="cell g" style="left:594px;top:187px;width:111px">Не определено</div>
<div class="cell num" style="left:709px;top:187px;width:75px">27791</div>
<div class="cell num" style="left:788px;top:187px;width:25px">шт.</div>
<div class="cell num" style="left:814px;top:187px;width:56px;text-align:right">0,47</div>
<div class="cell num" style="left:887px;top:187px;width:35px;text-align:right">30</div>
<div class="cell num" style="left:924px;top:187px;width:60px;text-align:right">6</div>
<div class="cell num" style="left:986px;top:187px;width:56px;text-align:right">180</div>
<div class="cell num" style="left:1044px;top:187px;width:72px;text-align:right">112,13843</div>
<div class="cell num" style="left:1118px;top:187px;width:61px;text-align:right">21</div>
<div class="cell num" style="left:1181px;top:187px;width:61px;text-align:right">100</div>
<div class="cell num" style="left:1244px;top:187px;width:56px;text-align:right">128</div>
<div class="cell num" style="left:1627px;top:187px;width:56px;text-align:right">21</div>
<div class="cell num" style="left:1710px;top:187px;width:56px;text-align:right">0,69</div>
<div style="left:1493px;top:188px;width:13px;height:13px;background:#fff;border:1px solid #333"></div>
<div style="left:1692px;top:188px;width:13px;height:13px;background:#fff;border:1px solid #333"></div>
<div class="cell uc" style="left:372px;top:205px;width:218px;letter-spacing:0.147px">САЛФЕТКИ ДЕТ.ВЛ.ПАМПЕРС БЭБ...</div>
<div class="cell num" style="left:594px;top:205px;width:111px">4015400439110</div>
<div class="cell num" style="left:709px;top:205px;width:75px">29348</div>
<div class="cell num" style="left:788px;top:205px;width:25px">шт.</div>
<div class="cell num" style="left:814px;top:205px;width:56px;text-align:right">2,51</div>
<div class="cell num" style="left:887px;top:205px;width:35px;text-align:right">1</div>
<div class="cell num" style="left:1118px;top:205px;width:61px;text-align:right">20</div>
<div class="cell num" style="left:1244px;top:205px;width:56px;text-align:right">4</div>
<div class="cell num" style="left:1627px;top:205px;width:56px;text-align:right">20</div>
<div class="cell num" style="left:1710px;top:205px;width:56px;text-align:right">3,45</div>
<div style="left:1493px;top:206px;width:13px;height:13px;background:#fff;border:1px solid #333"></div>
<div style="left:1692px;top:206px;width:13px;height:13px;background:#fff;border:1px solid #333"></div>
<div class="cell uc" style="left:372px;top:223px;width:218px;letter-spacing:0.127px">САЛФЕТКИ ДЕТ.ВЛ.ПАМПЕРС СЕН...</div>
<div class="cell num" style="left:594px;top:223px;width:111px">4015400636670</div>
<div class="cell num" style="left:709px;top:223px;width:75px">29350</div>
<div class="cell num" style="left:788px;top:223px;width:25px">шт.</div>
<div class="cell num" style="left:814px;top:223px;width:56px;text-align:right">4,98</div>
<div class="cell num" style="left:887px;top:223px;width:35px;text-align:right">1</div>
<div style="left:1493px;top:224px;width:13px;height:13px;background:#fff;border:1px solid #333"></div>
<div style="left:1692px;top:224px;width:13px;height:13px;background:#fff;border:1px solid #333"></div>
</div>
<div style="left:370px;top:162px;width:1399px;height:1px;background:#858585"></div>
<div style="left:370px;top:180px;width:1399px;height:1px;background:#858585"></div>
<div style="left:370px;top:198px;width:1399px;height:1px;background:#858585"></div>
<div style="left:370px;top:216px;width:1399px;height:1px;background:#858585"></div>
<div style="left:370px;top:234px;width:1399px;height:1px;background:#858585"></div>
<div style="left:370px;top:252px;width:1399px;height:1px;background:#858585"></div>
<div style="left:370px;top:270px;width:1399px;height:1px;background:#858585"></div>
<div style="left:370px;top:288px;width:1399px;height:1px;background:#858585"></div>
<div style="left:370px;top:306px;width:1399px;height:1px;background:#858585"></div>
<div style="left:370px;top:324px;width:1399px;height:1px;background:#858585"></div>
<div style="left:370px;top:342px;width:1399px;height:1px;background:#858585"></div>
<div style="left:370px;top:360px;width:1399px;height:1px;background:#858585"></div>
<div style="left:370px;top:378px;width:1399px;height:1px;background:#858585"></div>
<div style="left:370px;top:396px;width:1399px;height:1px;background:#858585"></div>
<div style="left:591px;top:157px;width:1px;height:239px;background:#858585"></div>
<div style="left:706px;top:157px;width:1px;height:239px;background:#858585"></div>
<div style="left:785px;top:157px;width:1px;height:239px;background:#858585"></div>
<div style="left:814px;top:157px;width:1px;height:239px;background:#858585"></div>
<div style="left:872px;top:157px;width:1px;height:239px;background:#858585"></div>
<div style="left:887px;top:157px;width:1px;height:239px;background:#858585"></div>
<div style="left:924px;top:157px;width:1px;height:239px;background:#858585"></div>
<div style="left:986px;top:157px;width:1px;height:239px;background:#858585"></div>
<div style="left:1044px;top:157px;width:1px;height:239px;background:#858585"></div>
<div style="left:1118px;top:157px;width:1px;height:239px;background:#858585"></div>
<div style="left:1181px;top:157px;width:1px;height:239px;background:#858585"></div>
<div style="left:1244px;top:157px;width:1px;height:239px;background:#858585"></div>
<div style="left:1302px;top:157px;width:1px;height:239px;background:#858585"></div>
<div style="left:1370px;top:157px;width:1px;height:239px;background:#858585"></div>
<div style="left:1428px;top:157px;width:1px;height:239px;background:#858585"></div>
<div style="left:1486px;top:157px;width:1px;height:239px;background:#858585"></div>
<div style="left:1511px;top:157px;width:1px;height:239px;background:#858585"></div>
<div style="left:1569px;top:157px;width:1px;height:239px;background:#858585"></div>
<div style="left:1627px;top:157px;width:1px;height:239px;background:#858585"></div>
<div style="left:1685px;top:157px;width:1px;height:239px;background:#858585"></div>
<div style="left:1710px;top:157px;width:1px;height:239px;background:#858585"></div>
<div style="left:1768px;top:157px;width:1px;height:239px;background:#858585"></div>
<div style="left:370px;top:325px;width:1398px;height:1px;background:#a8a8f4"></div>
<div style="left:370px;top:341px;width:1398px;height:1px;background:#a8a8f4"></div>
<div class="hdr" style="left:370px;top:123px;width:1398px;height:34px;"></div>
<div style="left:591px;top:123px;width:1px;height:33px;background:#e8e8e8"></div>
<div style="left:706px;top:123px;width:1px;height:33px;background:#e8e8e8"></div>
<div style="left:785px;top:123px;width:1px;height:33px;background:#e8e8e8"></div>
<div style="left:814px;top:123px;width:1px;height:33px;background:#e8e8e8"></div>
<div style="left:872px;top:123px;width:1px;height:33px;background:#e8e8e8"></div>
<div style="left:887px;top:123px;width:1px;height:33px;background:#e8e8e8"></div>
<div style="left:924px;top:123px;width:1px;height:33px;background:#e8e8e8"></div>
<div style="left:986px;top:123px;width:1px;height:33px;background:#e8e8e8"></div>
<div style="left:1044px;top:123px;width:1px;height:33px;background:#e8e8e8"></div>
<div style="left:1118px;top:123px;width:1px;height:33px;background:#e8e8e8"></div>
<div style="left:1181px;top:123px;width:1px;height:33px;background:#e8e8e8"></div>
<div style="left:1244px;top:123px;width:1px;height:33px;background:#e8e8e8"></div>
<div style="left:1302px;top:123px;width:1px;height:33px;background:#e8e8e8"></div>
<div style="left:1370px;top:123px;width:1px;height:33px;background:#e8e8e8"></div>
<div style="left:1428px;top:123px;width:1px;height:33px;background:#e8e8e8"></div>
<div style="left:1486px;top:123px;width:1px;height:33px;background:#e8e8e8"></div>
<div style="left:1511px;top:123px;width:1px;height:33px;background:#e8e8e8"></div>
<div style="left:1569px;top:123px;width:1px;height:33px;background:#e8e8e8"></div>
<div style="left:1627px;top:123px;width:1px;height:33px;background:#e8e8e8"></div>
<div style="left:1685px;top:123px;width:1px;height:33px;background:#e8e8e8"></div>
<div style="left:1710px;top:123px;width:1px;height:33px;background:#e8e8e8"></div>
<svg style="left:434px;top:133px" width="9" height="7" viewBox="0 0 9 7"><path d="M4.500 0.800L8.300 6.200H0.700Z" fill="#cfe2f8" stroke="#3b78c4" stroke-width="1.100"/></svg>
<div class="hc" style="left:450px;top:130px">Наименование</div>
<div class="hc" style="left:591px;top:129px;width:114px;text-align:center">Штрихкод</div>
<div class="hc" style="left:706px;top:129px;width:78px;text-align:center">Код</div>
<div class="hc" style="left:791px;top:129px;width:22px">Ед.</div>
<div class="hc" style="left:791px;top:144px;width:22px;height:12px">изм.</div>
<div class="hc" style="left:814px;top:129px;width:57px;text-align:center">Цена</div>
<svg style="left:875px;top:133px" width="9" height="7" viewBox="0 0 9 7"><path d="M4.500 0.800L8.300 6.200H0.700Z" fill="#cfe2f8" stroke="#3b78c4" stroke-width="1.100"/></svg>
<div class="hc" style="left:893px;top:129px;width:30px">Кол-в</div>
<div class="hc" style="left:893px;top:144px;width:30px;height:12px">в</div>
<div class="hc" style="left:929px;top:129px;width:56px">Кол-во</div>
<div class="hc" style="left:929px;top:144px;width:56px;height:12px">упаковок</div>
<div class="hc" style="left:991px;top:129px;width:52px">Кол-во</div>
<div class="hc" style="left:991px;top:144px;width:52px;height:12px">товара в</div>
<div class="hc" style="left:1049px;top:129px;width:68px">Рекомендуе</div>
<div class="hc" style="left:1053px;top:144px;width:64px;height:12px">к закупке ко</div>
<div class="hc" style="left:1125px;top:129px;width:55px">Текущий</div>
<div class="hc" style="left:1128px;top:144px;width:52px;height:12px">остаток</div>
<div class="hc" style="left:1187px;top:129px;width:56px">Дней в</div>
<div class="hc" style="left:1187px;top:144px;width:56px;height:12px">наличии,</div>
<div class="hc" style="left:1244px;top:129px;width:57px;text-align:center">Продано</div>
<div class="hc" style="left:1308px;top:129px;width:61px">Страховой</div>
<div class="hc" style="left:1312px;top:144px;width:57px;height:12px">запас</div>
<div class="hc" style="left:1376px;top:129px;width:51px">Резерв</div>
<div class="hc" style="left:1376px;top:144px;width:51px;height:12px">закупка</div>
<div class="hc" style="left:1434px;top:129px;width:51px">Резерв</div>
<div class="hc" style="left:1434px;top:144px;width:51px;height:12px">продажа</div>
<div class="hc" style="left:1492px;top:129px;width:18px">Вес</div>
<div class="hc" style="left:1492px;top:144px;width:18px;height:12px">ост.</div>
<div class="hc" style="left:1517px;top:129px;width:51px">Резерв</div>
<div class="hc" style="left:1517px;top:144px;width:51px;height:12px">закупка</div>
<div class="hc" style="left:1575px;top:129px;width:51px">Резерв</div>
<div class="hc" style="left:1575px;top:144px;width:51px;height:12px">продажа</div>
<div class="hc" style="left:1633px;top:129px;width:51px">Доступно</div>
<div class="hc" style="left:1637px;top:144px;width:47px;height:12px">к-во</div>
<div class="hc" style="left:1690px;top:129px;width:19px">Дос</div>
<div class="hc" style="left:1694px;top:144px;width:15px;height:12px">кол</div>
<div class="hc" style="left:1716px;top:129px;width:51px">Цена</div>
<div class="hc" style="left:1716px;top:144px;width:51px;height:12px">учетная</div>
<svg style="left:867px;top:151px" width="4" height="4" viewBox="0 0 4 4"><path d="M4 0V4H0Z" fill="#5b9bd5"/></svg>
<svg style="left:920px;top:151px" width="4" height="4" viewBox="0 0 4 4"><path d="M4 0V4H0Z" fill="#5b9bd5"/></svg>
<svg style="left:982px;top:151px" width="4" height="4" viewBox="0 0 4 4"><path d="M4 0V4H0Z" fill="#5b9bd5"/></svg>
<svg style="left:1040px;top:151px" width="4" height="4" viewBox="0 0 4 4"><path d="M4 0V4H0Z" fill="#5b9bd5"/></svg>
<svg style="left:1423px;top:151px" width="4" height="4" viewBox="0 0 4 4"><path d="M4 0V4H0Z" fill="#5b9bd5"/></svg>
<svg style="left:1481px;top:151px" width="4" height="4" viewBox="0 0 4 4"><path d="M4 0V4H0Z" fill="#5b9bd5"/></svg>
<svg style="left:1506px;top:151px" width="4" height="4" viewBox="0 0 4 4"><path d="M4 0V4H0Z" fill="#5b9bd5"/></svg>
<svg style="left:1564px;top:151px" width="4" height="4" viewBox="0 0 4 4"><path d="M4 0V4H0Z" fill="#5b9bd5"/></svg>
<svg style="left:1622px;top:151px" width="4" height="4" viewBox="0 0 4 4"><path d="M4 0V4H0Z" fill="#5b9bd5"/></svg>
<svg style="left:1680px;top:151px" width="4" height="4" viewBox="0 0 4 4"><path d="M4 0V4H0Z" fill="#5b9bd5"/></svg>
<div style="left:370px;top:156px;width:1398px;height:1px;background:#f4f5f6"></div>
<div style="left:1772px;top:157px;width:16px;height:239px;background:#f0f0f0"></div>
<div style="left:1772px;top:236px;width:15px;height:64px;background:#cdcdcd"></div>
<svg style="left:1775px;top:163px" width="8" height="6" viewBox="0 0 8 6"><path d="M0.5 5L4 1.5L7.5 5" fill="none" stroke="#505050" stroke-width="1.3"/></svg>
<svg style="left:1775px;top:384px" width="8" height="6" viewBox="0 0 8 6"><path d="M0.5 1L4 4.5L7.5 1" fill="none" stroke="#505050" stroke-width="1.3"/></svg>
<svg style="left:374px;top:404px" width="14" height="16" viewBox="0 0 14 16"><path d="M1.500 0V12.500H6M1.500 4.500H6" fill="none" stroke="#8a8a8a" stroke-width="1" stroke-dasharray="1 1"/><rect x="7.500" y="1.500" width="6" height="6.500" rx="1" fill="#cdcdcd" stroke="#adadad"/><rect x="7.500" y="9.500" width="6" height="6.500" rx="1" fill="#cdcdcd" stroke="#adadad"/><circle cx="13" cy="6.500" r="1.200" fill="#f4f4f4"/><circle cx="13" cy="14.500" r="1.200" fill="#f4f4f4"/></svg>
<svg style="left:394px;top:404px" width="14" height="16" viewBox="0 0 14 16"><path d="M1.500 0V12.500H6M1.500 4.500H6" fill="none" stroke="#8a8a8a" stroke-width="1" stroke-dasharray="1 1"/><rect x="7.500" y="1.500" width="6" height="6.500" rx="1" fill="#cdcdcd" stroke="#adadad"/><rect x="7.500" y="9.500" width="6" height="6.500" rx="1" fill="#cdcdcd" stroke="#adadad"/><circle cx="13" cy="6.500" r="1.200" fill="#f4f4f4"/><circle cx="13" cy="14.500" r="1.200" fill="#f4f4f4"/></svg>
<svg style="left:418px;top:405px" width="14" height="14" viewBox="0 0 14 14"><path d="M1 1.500H11L7.500 6V9.500H4.500V6Z" fill="#cfeeee" stroke="#3a3a3a" stroke-width="1.200" stroke-linejoin="round"/><path d="M3 2.500L5.500 6V8.500" fill="none" stroke="#0a8a8a" stroke-width="1"/><path d="M9.500 8V13M7 10.500H12" stroke="#1a1a1a" stroke-width="1"/></svg>
<svg style="left:443px;top:404px" width="16" height="15" viewBox="0 0 16 15"><rect x="0.5" y="0.5" width="15" height="14" fill="#f4f4f4" stroke="#a8a8a8"/><rect x="3" y="3" width="3" height="9" fill="#d8d8d8" stroke="#999" stroke-width=".6"/><rect x="7" y="3" width="2.4" height="9" fill="#555"/><rect x="10.4" y="3" width="3" height="9" fill="#d8d8d8" stroke="#999" stroke-width=".6"/></svg>
<svg style="left:464px;top:404px" width="15" height="15" viewBox="0 0 15 15"><path d="M5 2.5H14M5 7.5H14M5 12.5H14" stroke="#333" stroke-width="1.1"/><text x="0" y="5" font-size="5.5" font-weight="bold" font-family="Liberation Sans,sans-serif" fill="#222">1</text><text x="0" y="10" font-size="5.5" font-weight="bold" font-family="Liberation Sans,sans-serif" fill="#222">2</text><text x="0" y="15" font-size="5.5" font-weight="bold" font-family="Liberation Sans,sans-serif" fill="#222">3</text></svg>
<svg style="left:485px;top:404px" width="16" height="16" viewBox="0 0 16 16"><rect x="0.500" y="0.500" width="10" height="15" fill="#e6e6e6" stroke="#808080"/><rect x="1.500" y="2.500" width="8" height="2.500" fill="#777"/><path d="M2 7.500H9.500M2 10H9.500M2 12.500H9.500" stroke="#8a8a8a" stroke-width="1.100" stroke-dasharray="1.200 1.200"/><path d="M10.500 9V15.500M7.250 12.250H13.750" stroke="#5a5a5a" stroke-width="2.200" stroke-linecap="round"/></svg>
<svg style="left:503px;top:404px" width="16" height="15" viewBox="0 0 16 15"><rect x="0.500" y="0.500" width="15" height="14" fill="#fbfbfb" stroke="#a6a6a6"/><path d="M2.500 3.500H13.500M2.500 5.500H13.500M2.500 7.500H13.500" stroke="#e0e0e0" stroke-width="1"/><rect x="2.500" y="10.500" width="11" height="2" fill="#c4c4c4"/><text x="4.800" y="9.300" font-size="8.500" font-weight="bold" font-family="Liberation Serif,serif" fill="#111">Σ</text></svg>
<svg style="left:528px;top:404px" width="16" height="15" viewBox="0 0 16 15"><path d="M5 0.800H13L11 6H3Z" fill="#f2f2f2" stroke="#777" stroke-width=".8"/><path d="M1 7L3 5.500H14.500L15 7V11.500L13 13.500H1Z" fill="#bdbdbd" stroke="#666" stroke-width=".8"/><path d="M1 10H14" stroke="#555" stroke-width="1.6"/><path d="M2 12.500H12" stroke="#eee" stroke-width="1"/></svg>
<svg style="left:549px;top:404px" width="16" height="15" viewBox="0 0 16 15"><rect x="0.5" y="0.5" width="15" height="13.500" fill="#d4d4d4" stroke="#777"/><path d="M3.500 3L12.500 11.500M12.500 3L3.500 11.500" stroke="#777" stroke-width="1.600"/><path d="M2 7.200H14" stroke="#999" stroke-width="1"/></svg>
<svg style="left:573px;top:404px" width="16" height="16" viewBox="0 0 16 16"><rect x="0.700" y="0.700" width="13" height="12.500" fill="#fff" stroke="#111" stroke-width="1.400"/><path d="M1 5H14M5 1V13M9.500 1V13" stroke="#999" stroke-width="1"/><rect x="1.500" y="5.500" width="3.500" height="7" fill="#ccc"/><rect x="9" y="9" width="7" height="7" fill="#eee"/><path d="M10 10L15 15M15 10L10 15" stroke="#555" stroke-width="1.600"/></svg>
<div style="left:602px;top:406px;width:13px;height:13px;background:#fff;border:1px solid #333"><svg style="left:1px;top:1px" width="10" height="10" viewBox="0 0 10 10"><path d="M1 5L3.8 8L9 1.5" fill="none" stroke="#222" stroke-width="1.2"/></svg></div>
<div class="t" style="left:619px;top:406px;">Активные</div>
<div style="left:681px;top:400px;width:128px;height:23px;background:#e1e1e1;border:1px solid #adadad"></div>
<div class="t" style="left:686px;top:405px;">(все)</div>
<svg style="left:793px;top:409px" width="10" height="6" viewBox="0 0 10 6"><path d="M0.800 0.800L5 5L9.200 0.800" fill="none" stroke="#444" stroke-width="1.100"/></svg>
<div style="left:813px;top:406px;width:13px;height:13px;background:#fff;border:1px solid #333"><svg style="left:1px;top:1px" width="10" height="10" viewBox="0 0 10 10"><path d="M1 5L3.8 8L9 1.5" fill="none" stroke="#222" stroke-width="1.2"/></svg></div>
<div class="t" style="left:830px;top:406px;">Признак разделения</div>
<div style="left:960px;top:406px;width:13px;height:13px;background:#fff;border:1px solid #333"></div>
<div class="t" style="left:977px;top:406px;">В ассортименте (F4)</div>
<div style="left:1101px;top:400px;width:239px;height:23px;background:#e1e1e1;border:1px solid #adadad"></div>
<div class="t" style="left:1106px;top:405px;">В прайсе (F7)</div>
<svg style="left:1324px;top:409px" width="10" height="6" viewBox="0 0 10 6"><path d="M0.800 0.800L5 5L9.200 0.800" fill="none" stroke="#444" stroke-width="1.100"/></svg>
<div style="left:1344px;top:406px;width:13px;height:13px;background:#fff;border:1px solid #333"></div>
<div class="t" style="left:1361px;top:406px;">В акции</div>
<div class="btn" style="left:1414px;top:401px;width:101px;height:23px;"></div>
<svg style="left:1428px;top:406px" width="11" height="11" viewBox="0 0 11 11"><path d="M5.500 0.500V10.500M0.500 5.500H10.500" stroke="#7ed321" stroke-width="3"/><path d="M5.500 1V10M1 5.500H10" stroke="#a6e84a" stroke-width="1.200"/></svg>
<div class="t" style="left:1443px;top:406px;">Добавить</div>
<div class="btn" style="left:1521px;top:401px;width:135px;height:23px;"></div>
<svg style="left:1535px;top:405px" width="14" height="14" viewBox="0 0 14 14"><path d="M1 13L2.200 9.800L10.800 1.200L12.800 3.200L4.200 11.800Z" fill="#f0a832" stroke="#c07a18" stroke-width=".7"/><path d="M10.800 1.200L12.800 3.200" stroke="#d04040" stroke-width="2"/><path d="M1 13L2.200 9.800L4.200 11.800Z" fill="#444"/></svg>
<div class="t" style="left:1552px;top:406px;">Редактировать</div>
<div class="btn" style="left:1662px;top:401px;width:127px;height:23px;"></div>
<div class="t" style="left:1677px;top:406px;">Копировать (F5)</div>
<div style="left:369px;top:436px;width:1420px;height:1px;background:#dcdcdc"></div>
<div style="left:369px;top:437px;width:1420px;height:1px;background:#fff"></div>
<div style="left:369px;top:436px;width:1px;height:95px;background:#dcdcdc"></div>
<div style="left:1788px;top:436px;width:1px;height:95px;background:#dcdcdc"></div>
<div style="left:369px;top:530px;width:1420px;height:1px;background:#dcdcdc"></div>
<div class="t" style="left:373px;top:429px;background:#f0f0f0;padding:0 3px">Кол-во к заказу</div>
<div style="left:372px;top:453px;width:220px;height:1px;background:#dcdcdc"></div>
<div style="left:372px;top:454px;width:220px;height:1px;background:#fff"></div>
<div style="left:372px;top:453px;width:1px;height:75px;background:#dcdcdc"></div>
<div style="left:591px;top:453px;width:1px;height:75px;background:#dcdcdc"></div>
<div style="left:372px;top:527px;width:220px;height:1px;background:#dcdcdc"></div>
<div class="t" style="left:375px;top:446px;background:#f0f0f0;padding:0 3px">Продажи</div>
<div style="left:597px;top:453px;width:280px;height:1px;background:#dcdcdc"></div>
<div style="left:597px;top:454px;width:280px;height:1px;background:#fff"></div>
<div style="left:597px;top:453px;width:1px;height:75px;background:#dcdcdc"></div>
<div style="left:876px;top:453px;width:1px;height:75px;background:#dcdcdc"></div>
<div style="left:597px;top:527px;width:280px;height:1px;background:#dcdcdc"></div>
<div class="t" style="left:599px;top:446px;background:#f0f0f0;padding:0 3px">Расчетный запас</div>
<div style="left:878px;top:453px;width:224px;height:1px;background:#dcdcdc"></div>
<div style="left:878px;top:454px;width:224px;height:1px;background:#fff"></div>
<div style="left:878px;top:453px;width:1px;height:30px;background:#dcdcdc"></div>
<div style="left:1101px;top:453px;width:1px;height:30px;background:#dcdcdc"></div>
<div style="left:878px;top:482px;width:224px;height:1px;background:#dcdcdc"></div>
<div class="t" style="left:881px;top:446px;background:#f0f0f0;padding:0 3px">Буферы</div>
<div style="left:1107px;top:453px;width:418px;height:1px;background:#dcdcdc"></div>
<div style="left:1107px;top:454px;width:418px;height:1px;background:#fff"></div>
<div style="left:1107px;top:453px;width:1px;height:75px;background:#dcdcdc"></div>
<div style="left:1524px;top:453px;width:1px;height:75px;background:#dcdcdc"></div>
<div style="left:1107px;top:527px;width:418px;height:1px;background:#dcdcdc"></div>
<div class="t" style="left:1109px;top:446px;background:#f0f0f0;padding:0 3px">Акции</div>
<div class="t" style="left:375px;top:464px;letter-spacing:-0.12px">Продаж в день</div>
<div class="fld" style="left:466px;top:462px;width:125px;height:18px;">18,571</div>
<div class="t" style="left:375px;top:486px;letter-spacing:-0.12px">Кол-во дней</div>
<div class="fld" style="left:449px;top:484px;width:142px;height:18px;">3</div>
<div class="t" style="left:375px;top:508px;letter-spacing:-0.12px">Планируемые продажи</div>
<div class="fld" style="left:513px;top:506px;width:78px;height:18px;">55,713</div>
<div class="t" style="left:599px;top:464px;letter-spacing:-0.12px">Дисперсия однодневных продаж</div>
<div class="fld" style="left:795px;top:462px;width:79px;height:18px;">2,5</div>
<div class="t" style="left:599px;top:486px;letter-spacing:-0.12px">Z-оценка</div>
<div class="fld" style="left:654px;top:484px;width:220px;height:18px;">1,645</div>
<div class="t" style="left:599px;top:508px;letter-spacing:-0.12px">Коэффициент сезонности</div>
<div class="fld" style="left:752px;top:506px;width:122px;height:18px;">1</div>
<div class="t" style="left:881px;top:464px;letter-spacing:-0.12px">Страховой запас (авто)</div>
<div class="fld" style="left:1023px;top:462px;width:78px;height:18px;">7,17937</div>
<div class="t" style="left:1109px;top:464px;letter-spacing:-0.12px">Дата начала акции</div>
<div class="fld" style="left:1224px;top:462px;width:58px;height:18px;">21.07.19</div>
<div class="t" style="left:1109px;top:486px;letter-spacing:-0.12px">Акц. коэфф.</div>
<div class="fld" style="left:1183px;top:484px;width:99px;height:18px;">6</div>
<div class="t" style="left:1109px;top:508px;letter-spacing:-0.12px">Кол-во дней</div>
<div class="fld" style="left:1183px;top:506px;width:99px;height:18px;">5</div>
<div class="t" style="left:1290px;top:464px;letter-spacing:-0.12px">Дата окончания акции</div>
<div class="fld" style="left:1425px;top:462px;width:58px;height:18px;">03.08.19</div>
<div class="t" style="left:1290px;top:486px;letter-spacing:-0.12px">Продаж в день за акцию</div>
<div class="fld" style="left:1439px;top:484px;width:78px;height:18px;">19,417</div>
<div class="t" style="left:1290px;top:508px;letter-spacing:-0.12px">Планируемые продажи</div>
<div class="fld" style="left:1428px;top:506px;width:89px;height:18px;">97,085</div>
<div style="left:2px;top:537px;width:1793px;height:1px;background:#fff"></div>
<div style="left:2px;top:538px;width:1793px;height:1px;background:#d9d9d9"></div>
<div class="btn" style="left:1109px;top:544px;width:23px;height:24px;"></div>
<svg style="left:1113px;top:548px" width="15" height="16" viewBox="0 0 15 16"><path d="M2 6.500C3 2.500 8 1.500 11 4L12.500 2V8H7L9 6C7 4.500 5 5 4.500 7Z" fill="#7fb2e5"/><path d="M13 9.500C12 13.500 7 14.500 4 12L2.500 14V8H8L6 10C8 11.500 10 11 10.500 9Z" fill="#7fb2e5"/></svg>
<div style="left:1137px;top:543px;width:165px;height:26px;background:#e1e1e1"></div>
<svg style="left:1137px;top:543px" width="165" height="26" viewBox="0 0 165 26"><rect x="0.750" y="0.750" width="163.500" height="26" fill="none" stroke="#12e612" stroke-width="1.500"/><rect x="2.500" y="2.500" width="160" height="26" fill="none" stroke="#adadad" stroke-width="1"/></svg>
<div class="t" style="left:1138px;top:549px;width:162px;text-align:center;">Сохранить (alt ENTER)</div>
<div class="btn" style="left:1308px;top:545px;width:174px;height:24px;"></div>
<div class="t" style="left:1308px;top:549px;width:174px;text-align:center;">Отменить (shift ESCAPE)</div>
<div class="btn" style="left:1488px;top:545px;width:159px;height:24px;"></div>
<div class="t" style="left:1488px;top:549px;width:159px;text-align:center;">Провести (ctrl ENTER)</div>
<div class="btn" style="left:1653px;top:545px;width:139px;height:24px;"></div>
<div class="t" style="left:1653px;top:549px;width:139px;text-align:center;">Закрыть (ESCAPE)</div>
<svg style="left:0;top:0;pointer-events:none" width="1799" height="567" viewBox="0 0 1799 567" fill="none" stroke="#ed1c24"><rect x="46.5" y="24.5" width="55" height="25" stroke-width="3"/><rect x="366.5" y="52.5" width="59" height="25" stroke-width="3"/><rect x="369.5" y="443.5" width="222" height="83" stroke-width="3"/><rect x="596.5" y="444.5" width="505" height="83" stroke-width="3"/><rect x="1107.5" y="444.5" width="413" height="83" stroke-width="3"/><path d="M369 343.500H1771" stroke-width="3"/><path d="M1020.300 263.800L1066 326.300" stroke-width="3.200"/><path d="M1053.800 320.500L1066.500 327.300L1064.700 311.900" stroke-width="3" stroke-linejoin="miter"/><path d="M572 507.500Q817 422.500 1065 345.500" stroke-width="1"/><path d="M1054.500 345.300L1065 345.500L1059.500 350.500" stroke-width="1"/><path d="M1050.500 462.200L1071.500 346" stroke-width="1"/><path d="M1065.700 360.800L1071.500 346L1072.500 362" stroke-width="1"/><path d="M1439 508.500L1080.300 345.500" stroke-width="1"/><path d="M1083.500 351L1080.300 345.500L1090 346.500" stroke-width="1"/><path d="M1099.400 338.400C1183 318.600 1304 293.400 1373 283.400C1425 277.500 1460 283 1511 292.800C1570 308 1628 327 1661 338.600" stroke-width="1"/><path d="M1109.400 333L1099.400 338.400L1110.700 338.800" stroke-width="1"/></svg>
</div>
</body></html>
